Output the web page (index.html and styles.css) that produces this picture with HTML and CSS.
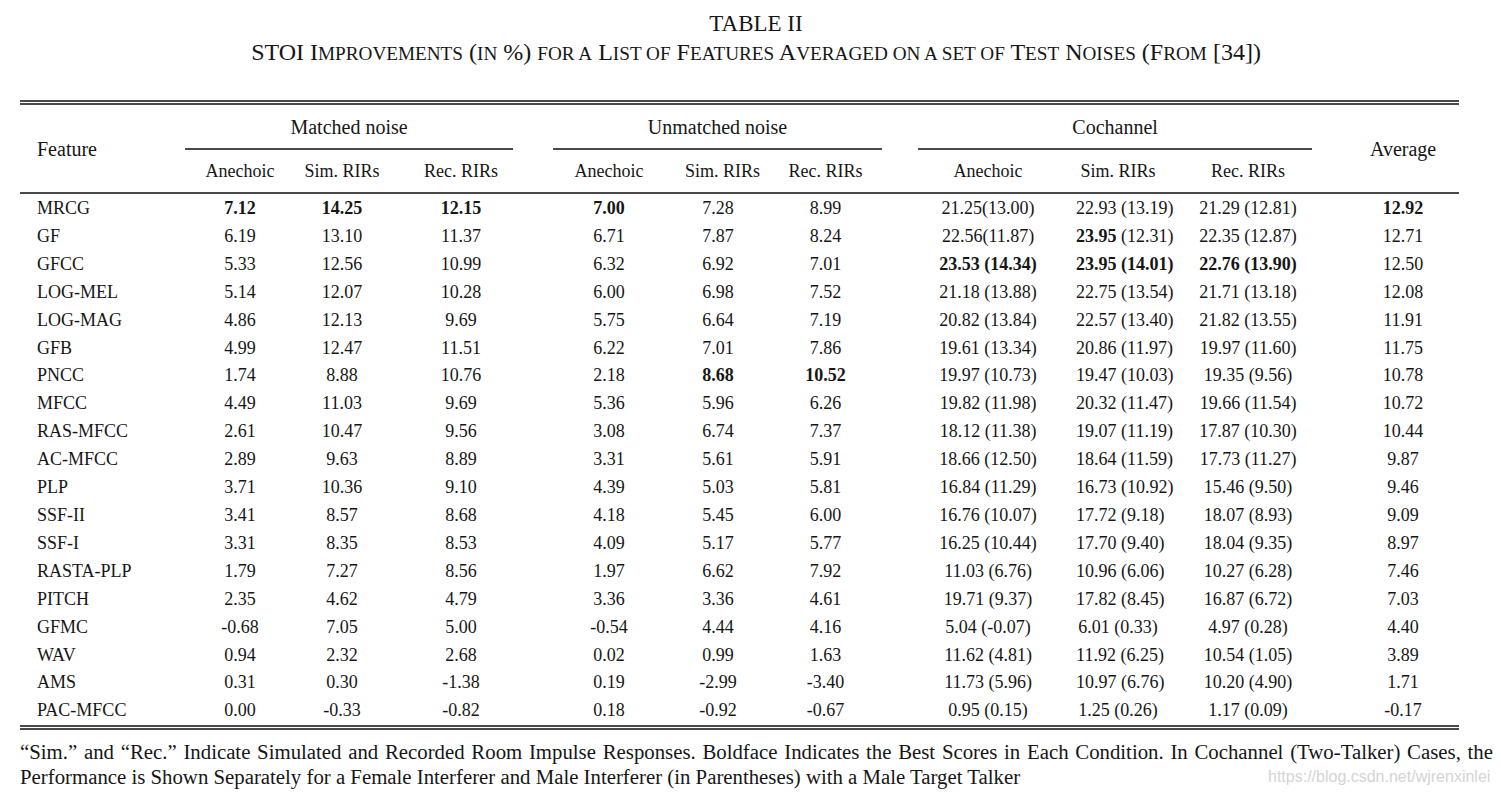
FILE: index.html
```html
<!DOCTYPE html>
<html lang="en">
<head>
<meta charset="utf-8">
<title>TABLE II</title>
<link rel="stylesheet" href="styles.css">
</head>
<body>
<main class="page">
  <header class="title">
    <div class="tname">TABLE II</div>
    <div class="tsub">STOI I<span class="sc">mprovements</span> (<span class="sc">in</span> %) <span class="sc">for a</span> L<span class="sc">ist of</span> F<span class="sc">eatures</span> A<span class="sc">veraged on a set of</span> T<span class="sc">est</span> N<span class="sc">oises</span> (F<span class="sc">rom</span> [34])</div>
  </header>

  <table class="stoi">
    <colgroup>
      <col class="c-feat">
      <col class="c-m1"><col class="c-m2"><col class="c-m3">
      <col class="c-u1"><col class="c-u2"><col class="c-u3">
      <col class="c-k1"><col class="c-k2"><col class="c-k3">
      <col class="c-avg">
    </colgroup>
    <thead>
      <tr class="grp">
        <th rowspan="2" class="feat-h">Feature</th>
        <th colspan="3" class="g"><div class="gline g-m">Matched noise</div></th>
        <th colspan="3" class="g"><div class="gline g-u">Unmatched noise</div></th>
        <th colspan="3" class="g"><div class="gline g-k">Cochannel</div></th>
        <th rowspan="2" class="avg-h">Average</th>
      </tr>
      <tr class="sub">
        <th>Anechoic</th><th>Sim. RIRs</th><th>Rec. RIRs</th>
        <th>Anechoic</th><th>Sim. RIRs</th><th>Rec. RIRs</th>
        <th>Anechoic</th><th>Sim. RIRs</th><th>Rec. RIRs</th>
      </tr>
    </thead>
    <tbody>
      <tr class="first"><td>MRCG</td><td><b>7.12</b></td><td><b>14.25</b></td><td><b>12.15</b></td><td><b>7.00</b></td><td>7.28</td><td>8.99</td><td>21.25(13.00)</td><td>22.93 (13.19)</td><td>21.29 (12.81)</td><td class="avg"><b>12.92</b></td></tr>
      <tr><td>GF</td><td>6.19</td><td>13.10</td><td>11.37</td><td>6.71</td><td>7.87</td><td>8.24</td><td>22.56(11.87)</td><td><b>23.95</b> (12.31)</td><td>22.35 (12.87)</td><td class="avg">12.71</td></tr>
      <tr><td>GFCC</td><td>5.33</td><td>12.56</td><td>10.99</td><td>6.32</td><td>6.92</td><td>7.01</td><td><b>23.53 (14.34)</b></td><td><b>23.95 (14.01)</b></td><td><b>22.76 (13.90)</b></td><td class="avg">12.50</td></tr>
      <tr><td>LOG-MEL</td><td>5.14</td><td>12.07</td><td>10.28</td><td>6.00</td><td>6.98</td><td>7.52</td><td>21.18 (13.88)</td><td>22.75 (13.54)</td><td>21.71 (13.18)</td><td class="avg">12.08</td></tr>
      <tr><td>LOG-MAG</td><td>4.86</td><td>12.13</td><td>9.69</td><td>5.75</td><td>6.64</td><td>7.19</td><td>20.82 (13.84)</td><td>22.57 (13.40)</td><td>21.82 (13.55)</td><td class="avg">11.91</td></tr>
      <tr><td>GFB</td><td>4.99</td><td>12.47</td><td>11.51</td><td>6.22</td><td>7.01</td><td>7.86</td><td>19.61 (13.34)</td><td>20.86 (11.97)</td><td>19.97 (11.60)</td><td class="avg">11.75</td></tr>
      <tr><td>PNCC</td><td>1.74</td><td>8.88</td><td>10.76</td><td>2.18</td><td><b>8.68</b></td><td><b>10.52</b></td><td>19.97 (10.73)</td><td>19.47 (10.03)</td><td>19.35 (9.56)</td><td class="avg">10.78</td></tr>
      <tr><td>MFCC</td><td>4.49</td><td>11.03</td><td>9.69</td><td>5.36</td><td>5.96</td><td>6.26</td><td>19.82 (11.98)</td><td>20.32 (11.47)</td><td>19.66 (11.54)</td><td class="avg">10.72</td></tr>
      <tr><td>RAS-MFCC</td><td>2.61</td><td>10.47</td><td>9.56</td><td>3.08</td><td>6.74</td><td>7.37</td><td>18.12 (11.38)</td><td>19.07 (11.19)</td><td>17.87 (10.30)</td><td class="avg">10.44</td></tr>
      <tr><td>AC-MFCC</td><td>2.89</td><td>9.63</td><td>8.89</td><td>3.31</td><td>5.61</td><td>5.91</td><td>18.66 (12.50)</td><td>18.64 (11.59)</td><td>17.73 (11.27)</td><td class="avg">9.87</td></tr>
      <tr><td>PLP</td><td>3.71</td><td>10.36</td><td>9.10</td><td>4.39</td><td>5.03</td><td>5.81</td><td>16.84 (11.29)</td><td>16.73 (10.92)</td><td>15.46 (9.50)</td><td class="avg">9.46</td></tr>
      <tr><td>SSF-II</td><td>3.41</td><td>8.57</td><td>8.68</td><td>4.18</td><td>5.45</td><td>6.00</td><td>16.76 (10.07)</td><td>17.72 (9.18)</td><td>18.07 (8.93)</td><td class="avg">9.09</td></tr>
      <tr><td>SSF-I</td><td>3.31</td><td>8.35</td><td>8.53</td><td>4.09</td><td>5.17</td><td>5.77</td><td>16.25 (10.44)</td><td>17.70 (9.40)</td><td>18.04 (9.35)</td><td class="avg">8.97</td></tr>
      <tr><td>RASTA-PLP</td><td>1.79</td><td>7.27</td><td>8.56</td><td>1.97</td><td>6.62</td><td>7.92</td><td>11.03 (6.76)</td><td>10.96 (6.06)</td><td>10.27 (6.28)</td><td class="avg">7.46</td></tr>
      <tr><td>PITCH</td><td>2.35</td><td>4.62</td><td>4.79</td><td>3.36</td><td>3.36</td><td>4.61</td><td>19.71 (9.37)</td><td>17.82 (8.45)</td><td>16.87 (6.72)</td><td class="avg">7.03</td></tr>
      <tr><td>GFMC</td><td>-0.68</td><td>7.05</td><td>5.00</td><td>-0.54</td><td>4.44</td><td>4.16</td><td>5.04 (-0.07)</td><td>6.01 (0.33)</td><td>4.97 (0.28)</td><td class="avg">4.40</td></tr>
      <tr><td>WAV</td><td>0.94</td><td>2.32</td><td>2.68</td><td>0.02</td><td>0.99</td><td>1.63</td><td>11.62 (4.81)</td><td>11.92 (6.25)</td><td>10.54 (1.05)</td><td class="avg">3.89</td></tr>
      <tr><td>AMS</td><td>0.31</td><td>0.30</td><td>-1.38</td><td>0.19</td><td>-2.99</td><td>-3.40</td><td>11.73 (5.96)</td><td>10.97 (6.76)</td><td>10.20 (4.90)</td><td class="avg">1.71</td></tr>
      <tr><td>PAC-MFCC</td><td>0.00</td><td>-0.33</td><td>-0.82</td><td>0.18</td><td>-0.92</td><td>-0.67</td><td>0.95 (0.15)</td><td>1.25 (0.26)</td><td>1.17 (0.09)</td><td class="avg">-0.17</td></tr>
    </tbody>
  </table>

  <p class="note">“Sim.” and “Rec.” Indicate Simulated and Recorded Room Impulse Responses. Boldface Indicates the Best Scores in Each Condition. In Cochannel (Two-Talker) Cases, the Performance is Shown Separately for a Female Interferer and Male Interferer (in Parentheses) with a Male Target Talker</p>

  <span class="watermark">https://blog.csdn.net/wjrenxinlei</span>
</main>
</body>
</html>
```

FILE: styles.css
```css
html, body {
  margin: 0;
  padding: 0;
  background: #ffffff;
}

body {
  font-family: "Liberation Serif", "Times New Roman", serif;
  color: #161616;
}

.page {
  position: relative;
  width: 1501px;
  height: 797px;
  padding-top: 10px;
  box-sizing: border-box;
  overflow: hidden;
}

.title {
  padding-left: 11px;
  text-align: center;
  font-family: "Liberation Serif", "Times New Roman", serif;
}

.tname {
  font-size: 23px;
  line-height: 28px;
}

.tsub {
  font-size: 24px;
  line-height: 28px;
  white-space: nowrap;
}

.sc {
  font-size: 0.8em;
  text-transform: uppercase;
}

.stoi {
  margin: 32px 0 0 20px;
  width: 1439px;
  table-layout: fixed;
  border-collapse: separate;
  border-spacing: 0;
  border-top: 5px double #4a4a4a;
  border-bottom: 5px double #4a4a4a;
  font-family: "Liberation Serif", "Times New Roman", serif;
  font-size: 18px;
  color: #161616;
}

.c-feat { width: 165px; }
.c-m1 { width: 110px; }
.c-m2 { width: 94px; }
.c-m3 { width: 144px; }
.c-u1 { width: 152px; }
.c-u2 { width: 66px; }
.c-u3 { width: 149px; }
.c-k1 { width: 176px; }
.c-k2 { width: 84px; }
.c-k3 { width: 176px; }
.c-avg { width: 123px; }

.stoi th {
  font-family: "Liberation Serif", "Times New Roman", serif;
  font-weight: normal;
  padding: 0;
  white-space: nowrap;
}

.stoi th.feat-h,
.stoi th.avg-h {
  font-size: 20px;
  line-height: 24px;
  vertical-align: middle;
  border-bottom: 2px solid #4a4a4a;
}

.stoi th.feat-h {
  text-align: left;
  padding-left: 17px;
}

.stoi th.avg-h {
  text-align: center;
  padding-left: 11px;
}

.stoi th.g {
  padding-top: 10px;
  vertical-align: top;
}

.gline {
  font-size: 20px;
  line-height: 24px;
  text-align: center;
  padding-bottom: 9px;
  border-bottom: 2px solid #4a4a4a;
}

.g-m { margin: 0 20px 0 0; }
.g-u { margin: 0 18px 0 20px; }
.g-k { margin: 0 24px 0 18px; }

.sub th {
  font-size: 18px;
  line-height: 24px;
  text-align: center;
  border-bottom: 2px solid #4a4a4a;
}

.stoi .sub th {
  padding: 9px 0;
}

.stoi td {
  padding: 0;
  line-height: 27.9px;
  text-align: center;
  white-space: nowrap;
}

.stoi td:first-child {
  text-align: left;
  padding-left: 17px;
}

.stoi tr.first td {
  padding-top: 1px;
}

.stoi td.avg {
  padding-left: 11px;
}

.stoi b {
  font-weight: bold;
}

.note {
  margin: 9px 8px 0 20px;
  font-family: "Liberation Serif", "Times New Roman", serif;
  font-size: 20.8px;
  line-height: 25px;
  text-align: justify;
}

.watermark {
  position: absolute;
  left: 1268px;
  top: 766px;
  font-family: "Liberation Sans", Arial, sans-serif;
  font-size: 16px;
  line-height: 22px;
  color: #d4d4d4;
  white-space: nowrap;
}
```
